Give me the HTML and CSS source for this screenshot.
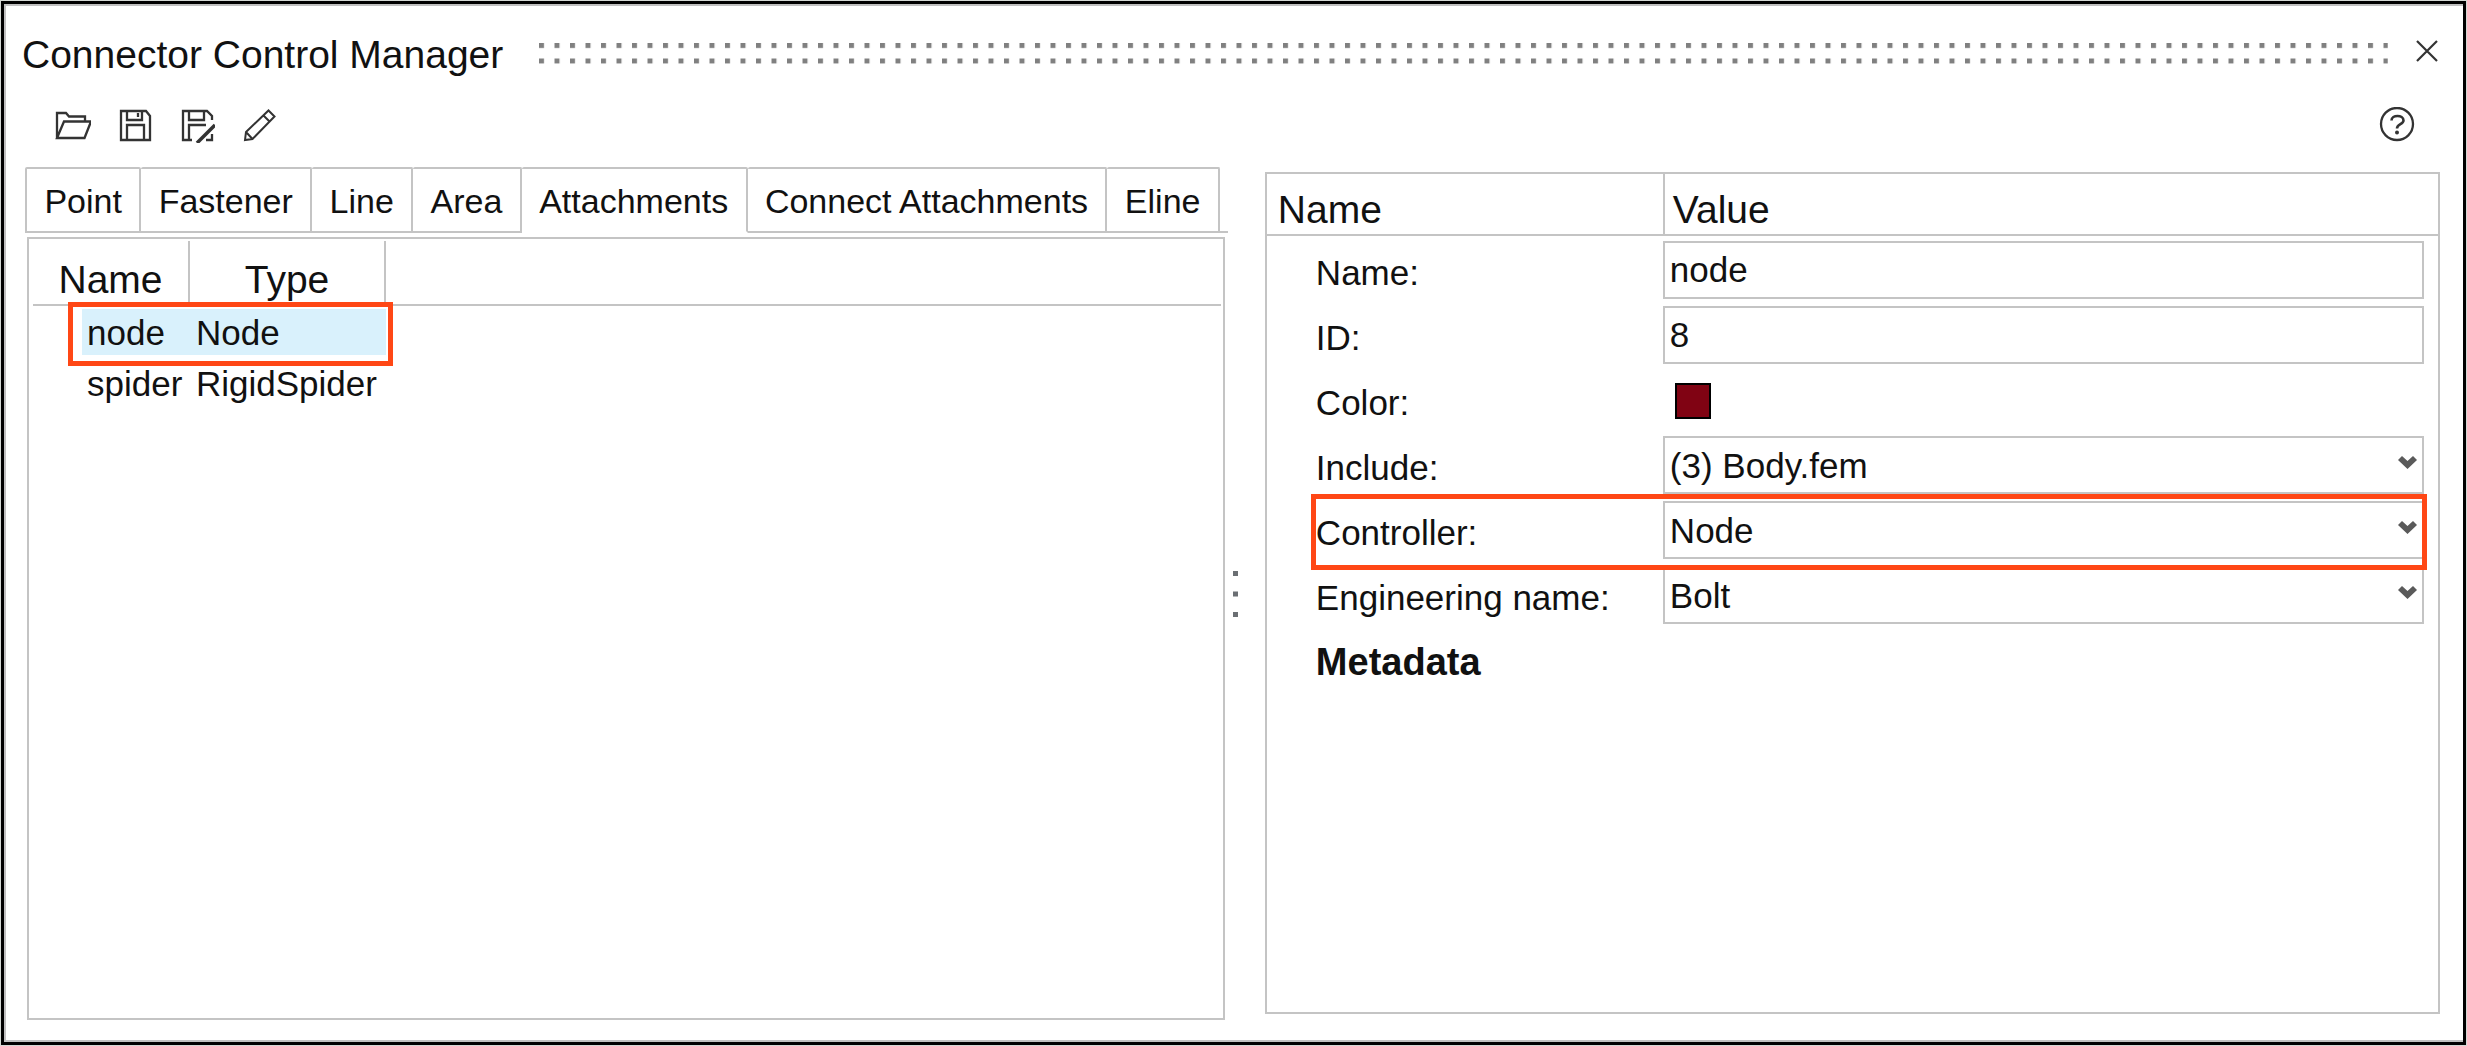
FILE: index.html
```html
<!DOCTYPE html>
<html lang="en">
<head>
<meta charset="utf-8">
<title>Connector Control Manager</title>
<link rel="stylesheet" href="styles.css">
</head>
<body>
<main class="window">
  <header class="titlebar">
    <h1 class="title">Connector Control Manager</h1>
    <svg class="grip" aria-hidden="true">
      <defs>
        <pattern id="dots" width="15.5" height="15.5" patternUnits="userSpaceOnUse">
          <rect width="5" height="5" fill="#808080"/>
        </pattern>
      </defs>
      <rect width="100%" height="100%" fill="url(#dots)"/>
    </svg>
    <button class="icon-button close" type="button" aria-label="Close">
      <svg viewBox="0 0 24 24" width="24" height="24"><path d="M2 2L22 22M22 2L2 22" stroke-width="2.2"/></svg>
    </button>
  </header>

  <div class="toolbar">
    <button class="icon-button" type="button" aria-label="Open">
      <svg viewBox="0 0 36 36" width="36" height="36"><path d="M2 31V6h9l3 3.500h16v5M2 31L9 14.500h27L29.500 31z"/></svg>
    </button>
    <button class="icon-button" type="button" aria-label="Save">
      <svg viewBox="0 0 36 36" width="36" height="36"><path d="M4 4h25l4 5v24H4zM10 4v9h15V4M10 33V18h17v15M21 6v4"/></svg>
    </button>
    <button class="icon-button" type="button" aria-label="Save as">
      <svg viewBox="0 0 36 36" width="36" height="36"><path d="M13 33H4V4h24l5 5v4M10 4v9h15V4M10 33V18h17M27 33h6v-6"/><path d="M36 18L18 36" stroke-width="3.500"/></svg>
    </button>
    <button class="icon-button" type="button" aria-label="Edit">
      <svg viewBox="0 0 36 36" width="36" height="36"><path d="M4 33l1-8L27.500 3.500l6 6L11.500 32zM22.500 8.500l6 6M5 25l6.500 7" stroke-width="2"/></svg>
    </button>
    <button class="icon-button help" type="button" aria-label="Help">
      <svg viewBox="0 0 36 36" width="36" height="36"><circle cx="18" cy="17" r="16"/><path d="M12.500 13.500c0-6 12-6 12 0 0 4-6.500 3.500-6.500 8" stroke-width="2.600"/><circle class="solid" cx="18" cy="25.500" r="2"/></svg>
    </button>
  </div>

  <div class="body">
    <section class="left">
      <div class="tabs" role="tablist">
        <button class="tab" type="button" role="tab">Point</button>
        <button class="tab" type="button" role="tab">Fastener</button>
        <button class="tab" type="button" role="tab">Line</button>
        <button class="tab" type="button" role="tab">Area</button>
        <button class="tab tab-selected" type="button" role="tab" aria-selected="true">Attachments</button>
        <button class="tab" type="button" role="tab">Connect Attachments</button>
        <button class="tab" type="button" role="tab">Eline</button>
      </div>
      <div class="list-panel">
        <table class="list">
          <colgroup><col class="col-name"><col class="col-type"><col></colgroup>
          <thead><tr><th>Name</th><th>Type</th><th></th></tr></thead>
          <tbody>
            <tr class="selected"><td>node</td><td>Node</td><td></td></tr>
            <tr><td>spider</td><td>RigidSpider</td><td></td></tr>
          </tbody>
        </table>
      </div>
    </section>

    <div class="splitter">
      <svg viewBox="0 0 5 46" width="5" height="46" aria-hidden="true"><path d="M0 0h5v5H0zM0 20.500h5v5H0zM0 41h5v5H0z"/></svg>
    </div>

    <section class="properties">
      <div class="prop-head"><span>Name</span><span>Value</span></div>
      <form class="prop-rows">
        <div class="prop"><label for="p-name">Name:</label><input class="field" id="p-name" type="text" value="node"></div>
        <div class="prop"><label for="p-id">ID:</label><input class="field" id="p-id" type="text" value="8"></div>
        <div class="prop"><label for="p-color">Color:</label><input class="swatch" id="p-color" type="color" value="#800313"></div>
        <div class="prop"><label for="p-include">Include:</label>
          <div class="dropdown"><select class="field" id="p-include"><option>(3) Body.fem</option></select><svg class="chevron" viewBox="0 0 19 13"><path d="M0 4L4 0l5.500 5L15 0l4 4-9.500 9z"/></svg></div></div>
        <div class="prop highlighted"><label for="p-controller">Controller:</label>
          <div class="dropdown"><select class="field" id="p-controller"><option>Node</option></select><svg class="chevron" viewBox="0 0 19 13"><path d="M0 4L4 0l5.500 5L15 0l4 4-9.500 9z"/></svg></div></div>
        <div class="prop"><label for="p-eng">Engineering name:</label>
          <div class="dropdown"><select class="field" id="p-eng"><option>Bolt</option></select><svg class="chevron" viewBox="0 0 19 13"><path d="M0 4L4 0l5.500 5L15 0l4 4-9.500 9z"/></svg></div></div>
        <h2 class="group">Metadata</h2>
      </form>
    </section>
  </div>
</main>
</body>
</html>
```
FILE: styles.css
```css
:root {
  --line: #c4c4c4;
  --text: #111;
  --icon: #333;
  --mark: #ff4715;
}

*, *::before, *::after { box-sizing: border-box; }

body {
  margin: 0;
  padding: 1px;
  background: #d4d8d4;
  color: var(--text);
  font-family: "Liberation Sans", Arial, sans-serif;
  font-size: 35px;
}

button, input, select { font: inherit; color: inherit; }

.window {
  display: flex;
  flex-direction: column;
  min-height: calc(100vh - 2px);
  border: 3px solid #000;
  background: #fff;
  box-shadow: inset 2px 2px #c0c0c0, inset 0 -2px #c0c0c0;
}

.titlebar {
  display: flex;
  align-items: center;
  padding: 29px 24px 0 18px;
}

.title {
  margin: 0;
  font-size: 39px;
  font-weight: normal;
  line-height: 44px;
  white-space: nowrap;
}

.grip {
  flex: 1;
  min-width: 0;
  height: 21px;
  margin: 0 27px 4px 36px;
}

.icon-button {
  display: flex;
  padding: 0;
  border: 0;
  background: none;
}

.icon-button svg {
  fill: none;
  stroke: var(--icon);
  stroke-width: 2.3;
}

.icon-button .solid { fill: var(--icon); stroke: none; }

.close { margin-bottom: 8px; }

.toolbar {
  display: flex;
  gap: 26px;
  padding: 30px 48px 0 51px;
}

.help { margin-left: auto; }

.body {
  flex: 1;
  display: grid;
  grid-template-columns: minmax(0, 97fr) 40px minmax(0, 95fr);
  padding: 24px 23px 22px 21px;
}

.left { display: flex; flex-direction: column; }

.tabs {
  display: flex;
  margin: 0 -3px 4px 0;
}

.tabs::after {
  content: "";
  width: 8px;
  border-bottom: 2px solid var(--line);
}

.tab {
  flex: 1 1 auto;
  height: 66px;
  padding: 2px 16px 0;
  border: 2px solid var(--line);
  border-left-width: 0;
  border-radius: 2px 2px 0 0;
  background: #fff;
  font-size: 34px;
  white-space: nowrap;
}

.tab:first-child { border-left-width: 2px; }
.tab-selected { border-bottom-color: transparent; }

.list-panel {
  flex: 1;
  margin-left: 2px;
  padding: 2px 2px 0 4px;
  border: 2px solid var(--line);
}

.list {
  width: 100%;
  table-layout: fixed;
  border-spacing: 0;
}

.col-name { width: 157px; }
.col-type { width: 196px; }

.list th {
  height: 65px;
  padding: 15px 0 0;
  border-right: 2px solid var(--line);
  border-bottom: 2px solid var(--line);
  font-size: 39px;
  font-weight: normal;
  line-height: 44px;
}

.list th:last-child { border-right: 0; }

.list td {
  height: 51px;
  padding: 2px 0 0 6px;
  border: 0 solid transparent;
  border-width: 3px 0 2px;
  background-clip: padding-box;
  line-height: 40px;
  white-space: nowrap;
}

.list td:first-child {
  position: relative;
  padding-left: 5px;
  border-left-width: 49px;
}

.selected td:not(:last-child) { background-color: #d9f1fc; }

.selected td:first-child::after {
  content: "";
  position: absolute;
  z-index: 1;
  top: -7px;
  left: -14px;
  width: 325px;
  height: 64px;
  border: 5px solid var(--mark);
}

.splitter {
  display: flex;
  align-items: center;
  padding-left: 8px;
}

.splitter svg { fill: #6b6f73; }

.properties {
  margin: 5px 0 6px;
  border: 2px solid var(--line);
}

.prop-head, .prop {
  display: grid;
  grid-template-columns: 396px minmax(0, 1fr);
}

.prop-head {
  border-bottom: 2px solid var(--line);
  font-size: 39px;
  line-height: 44px;
}

.prop-head span { padding: 14px 0 2px 11px; }

.prop-head span + span {
  padding-left: 8px;
  border-left: 2px solid var(--line);
}

.prop-rows {
  display: flex;
  flex-direction: column;
  gap: 7px;
  padding: 5px 14px 0 0;
}

.prop {
  position: relative;
  height: 58px;
}

.prop label {
  padding: 5px 0 0 49px;
  line-height: 53px;
}

.field {
  display: block;
  width: 100%;
  height: 58px;
  padding: 0 5px;
  border: 2px solid var(--line);
  border-radius: 0;
  background: #fff;
  appearance: none;
}

.dropdown { position: relative; }

.chevron {
  position: absolute;
  top: 20px;
  right: 7px;
  width: 19px;
  height: 13px;
  fill: #5a5a5a;
}

.swatch {
  align-self: center;
  width: 36px;
  height: 36px;
  margin: 2px 0 0 12px;
  padding: 0;
  border: 2px solid #000;
  background: none;
  appearance: none;
}

.swatch::-webkit-color-swatch-wrapper { padding: 0; }
.swatch::-webkit-color-swatch { border: 0; border-radius: 0; }

.highlighted::after {
  content: "";
  position: absolute;
  z-index: 1;
  top: -7px;
  right: -3px;
  bottom: -11px;
  left: 44px;
  border: 5px solid var(--mark);
  pointer-events: none;
}

.group {
  margin: 0;
  padding: 2px 0 0 49px;
  font-size: 38px;
  line-height: 58px;
}
```
